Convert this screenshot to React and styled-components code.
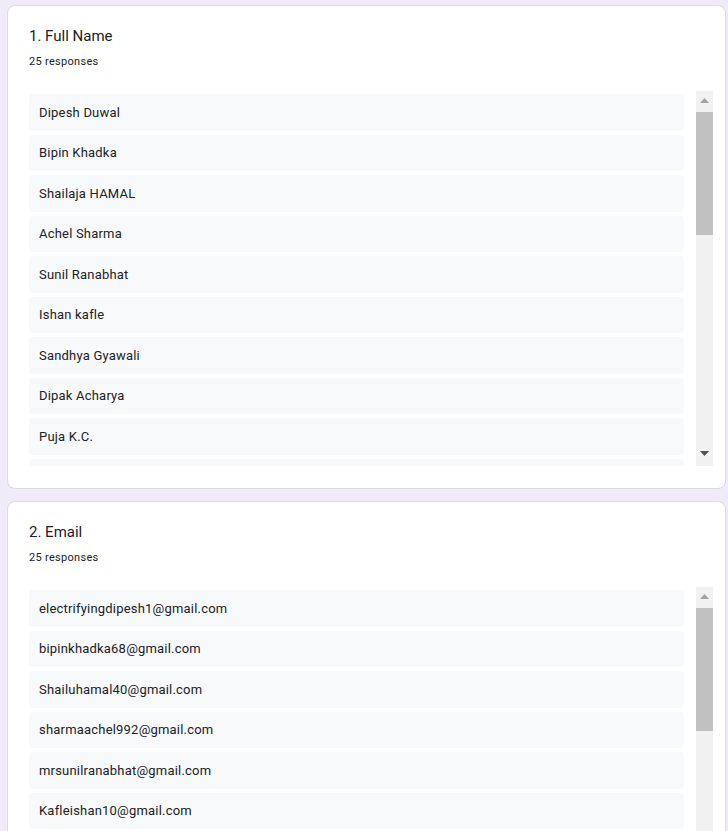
import styled, { createGlobalStyle } from 'styled-components';

const GlobalStyle = createGlobalStyle`
  html, body {
    margin: 0;
    padding: 0;
    background: #f0ebf8;
    font-family: Roboto, "Liberation Sans", Arial, sans-serif;
    color: #202124;
  }
`;

const Page = styled.main`
  display: flex;
  flex-direction: column;
  gap: 12px;
  padding: 5px 2px 20px 7px;
`;

const Card = styled.section`
  background: #fff;
  border: 1px solid #dadce0;
  border-radius: 8px;
  padding: 19px 12px 22px 21px;
`;

const Title = styled.h2`
  margin: 0;
  font-size: 15px;
  line-height: 22px;
  font-weight: 400;
  color: #202124;
`;

const Count = styled.p`
  margin: 7px 0 0;
  font-size: 11px;
  line-height: 16px;
  letter-spacing: 0.3px;
  color: #202124;
`;

const ListBox = styled.div`
  display: flex;
  margin-top: 21px;
  height: 375px;
`;

const List = styled.ul`
  flex: 1;
  list-style: none;
  margin: 0 12px 0 0;
  padding: 3px 0 0;
  overflow: hidden;
  display: flex;
  flex-direction: column;
  gap: 4px;
`;

const Item = styled.li`
  flex-shrink: 0;
  height: 36.5px;
  display: flex;
  align-items: center;
  padding: 0 10px;
  background: #f8f9fa;
  border-radius: 4px;
  font-size: 13px;
  letter-spacing: 0.2px;
  color: #202124;
`;

const Track = styled.div`
  width: 17px;
  background: #f1f1f1;
  display: flex;
  flex-direction: column;
  align-items: center;
  padding: 1px 0 4px;
`;

const ArrowButton = styled.div`
  width: 17px;
  height: 17px;
  flex-shrink: 0;
  display: flex;
  align-items: center;
  justify-content: center;
  color: ${(p) => (p.$disabled ? '#a3a3a3' : '#505050')};
`;

const Thumb = styled.div`
  width: 17px;
  height: 123px;
  margin-top: 3px;
  background: #c1c1c1;
`;

const Spacer = styled.div`
  flex: 1;
`;

function Arrow({ up, disabled }) {
  return (
    <ArrowButton $disabled={disabled}>
      <svg width="9" height="5" viewBox="0 0 9 5">
        <polygon
          points={up ? '0,5 9,5 4.5,0' : '0,0 9,0 4.5,5'}
          fill="currentColor"
        />
      </svg>
    </ArrowButton>
  );
}

function ResponseCard({ title, count, answers }) {
  return (
    <Card>
      <Title>{title}</Title>
      <Count>{count} responses</Count>
      <ListBox>
        <List>
          {answers.map((a, i) => (
            <Item key={i}>{a}</Item>
          ))}
        </List>
        <Track>
          <Arrow up disabled />
          <Thumb />
          <Spacer />
          <Arrow />
        </Track>
      </ListBox>
    </Card>
  );
}

const names = [
  'Dipesh Duwal',
  'Bipin Khadka',
  'Shailaja HAMAL',
  'Achel Sharma',
  'Sunil Ranabhat',
  'Ishan kafle',
  'Sandhya Gyawali',
  'Dipak Acharya',
  'Puja K.C.',
  'Sagar Thapa',
];

const emails = [
  'electrifyingdipesh1@gmail.com',
  'bipinkhadka68@gmail.com',
  'Shailuhamal40@gmail.com',
  'sharmaachel992@gmail.com',
  'mrsunilranabhat@gmail.com',
  'Kafleishan10@gmail.com',
  'sandhyagyawali@gmail.com',
  'dipakacharya@gmail.com',
  'pujakc@gmail.com',
  'sagarthapa@gmail.com',
];

export default function App() {
  return (
    <>
      <GlobalStyle />
      <Page>
        <ResponseCard title="1. Full Name" count={25} answers={names} />
        <ResponseCard title="2. Email" count={25} answers={emails} />
      </Page>
    </>
  );
}
